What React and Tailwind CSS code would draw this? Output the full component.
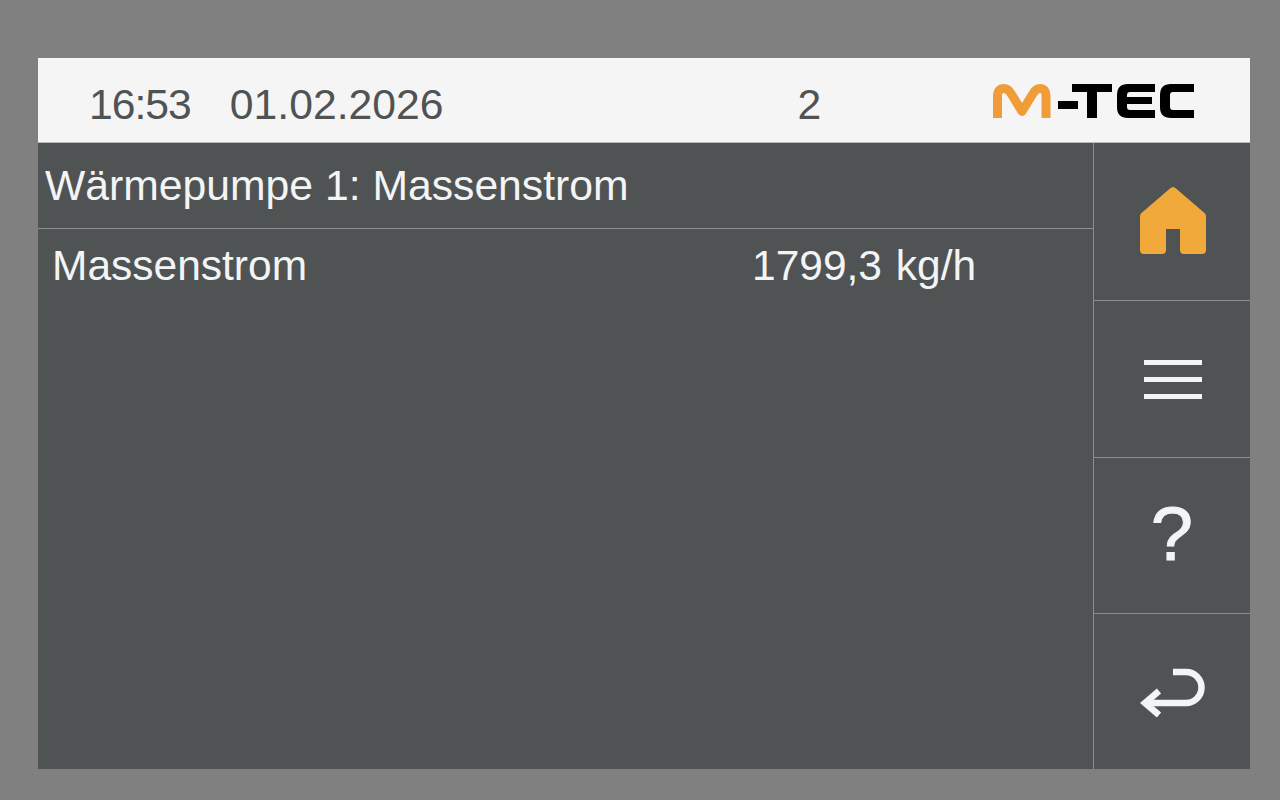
function HomeIcon() {
  return (
    <svg width="66" height="67" viewBox="0 0 66 67" fill="#f2a93b">
      <path d="M33 0 Q34.500 0 36 1.500 L64.500 26 Q66 27.500 66 29 L66 63 Q66 67 62 67 L44 67 Q40 67 40 63 L40 42 L26 42 L26 63 Q26 67 22 67 L4 67 Q0 67 0 63 L0 29 Q0 27.500 1.500 26 L30 1.500 Q31.500 0 33 0 Z" />
    </svg>
  )
}

function MenuIcon() {
  return (
    <div className="flex flex-col gap-3 w-[58px]">
      <div className="h-[5px] bg-[#f3f4f5]" />
      <div className="h-[5px] bg-[#f3f4f5]" />
      <div className="h-[5px] bg-[#f3f4f5]" />
    </div>
  )
}

function BackIcon() {
  return (
    <svg width="68" height="56" viewBox="0 0 68 56" fill="none" stroke="#f3f4f5" strokeWidth="6.5">
      <path d="M35 4 L48 4 A15.500 15.500 0 0 1 48 35 L8 35" />
      <path d="M21 23 L7 35 L21 47" />
    </svg>
  )
}

function Logo() {
  return (
    <svg width="204" height="36" viewBox="0 0 204 36" role="img" aria-label="M-TEC" className="block">
      <path d="M5.500 35 L5.500 13 Q5.500 5.500 12 5.500 Q16 5.500 19 10.500 L30 28.500 L41 10.500 Q44 5.500 48 5.500 Q54 5.500 54 13 L54 35" fill="none" stroke="#f09c38" strokeWidth="9" strokeLinejoin="round" />
      <g fill="#000000">
        <rect x="66" y="18" width="20" height="8" />
        <rect x="80" y="1" width="40" height="8" />
        <rect x="95" y="1" width="10" height="34" />
        <path d="M163 1 L136 1 Q125 1 125 12 L125 24 Q125 35 136 35 L163 35 L163 27 L138 27 Q135 27 135 24 L135 21 L160 21 L160 14 L135 14 L135 12 Q135 9 138 9 L163 9 Z" />
        <path d="M202 1 L179 1 Q168 1 168 12 L168 24 Q168 35 179 35 L202 35 L202 27 L181 27 Q178 27 178 24 L178 12 Q178 9 181 9 L202 9 Z" />
      </g>
    </svg>
  )
}

function App() {
  return (
    <div className="w-[1280px] h-[800px] bg-[#808080] pt-[58px] pl-[38px] overflow-hidden font-['Liberation_Sans',Arial,sans-serif]">
      <div className="w-[1212px] h-[711px] flex flex-col bg-[#505354]">
        <div className="h-[85px] shrink-0 flex items-center pt-[9px] bg-[#f5f5f5] border-b border-[#b9bbbb] text-[42.7px] text-[#505354]">
          <span className="ml-[51px] tracking-[-1px]">16:53</span>
          <span className="ml-[39px]">01.02.2026</span>
          <span className="ml-[354px]">2</span>
          <div className="ml-[171px] mt-[-7px]">
            <Logo />
          </div>
        </div>

        <div className="flex-1 flex min-h-0">
          <div className="flex-1 text-[#f3f4f5]">
            <div className="h-[86px] flex items-center pl-[7px] border-b border-[#8b8e8f] text-[42.7px]">
              Wärmepumpe 1: Massenstrom
            </div>
            <div className="h-[74px] flex items-center pl-[14px] text-[42.5px]">
              <span className="w-[700px]">Massenstrom</span>
              <span className="[word-spacing:2px]">1799,3 kg/h</span>
            </div>
          </div>

          <div className="w-[157px] shrink-0 flex flex-col border-l border-[#8b8e8f]">
            <div className="h-[158px] flex items-center justify-center border-b border-[#8b8e8f] pb-[2px] pl-[2px]">
              <HomeIcon />
            </div>
            <div className="h-[157px] flex items-center justify-center border-b border-[#8b8e8f] pl-[2px]">
              <MenuIcon />
            </div>
            <div className="h-[156px] flex items-center justify-center border-b border-[#8b8e8f] text-[76px] text-[#f3f4f5] pb-[4px] [-webkit-text-stroke:1px_#f3f4f5]">
              ?
            </div>
            <div className="flex-1 flex items-center justify-center pt-[8px]">
              <BackIcon />
            </div>
          </div>
        </div>
      </div>
    </div>
  )
}

export default App
